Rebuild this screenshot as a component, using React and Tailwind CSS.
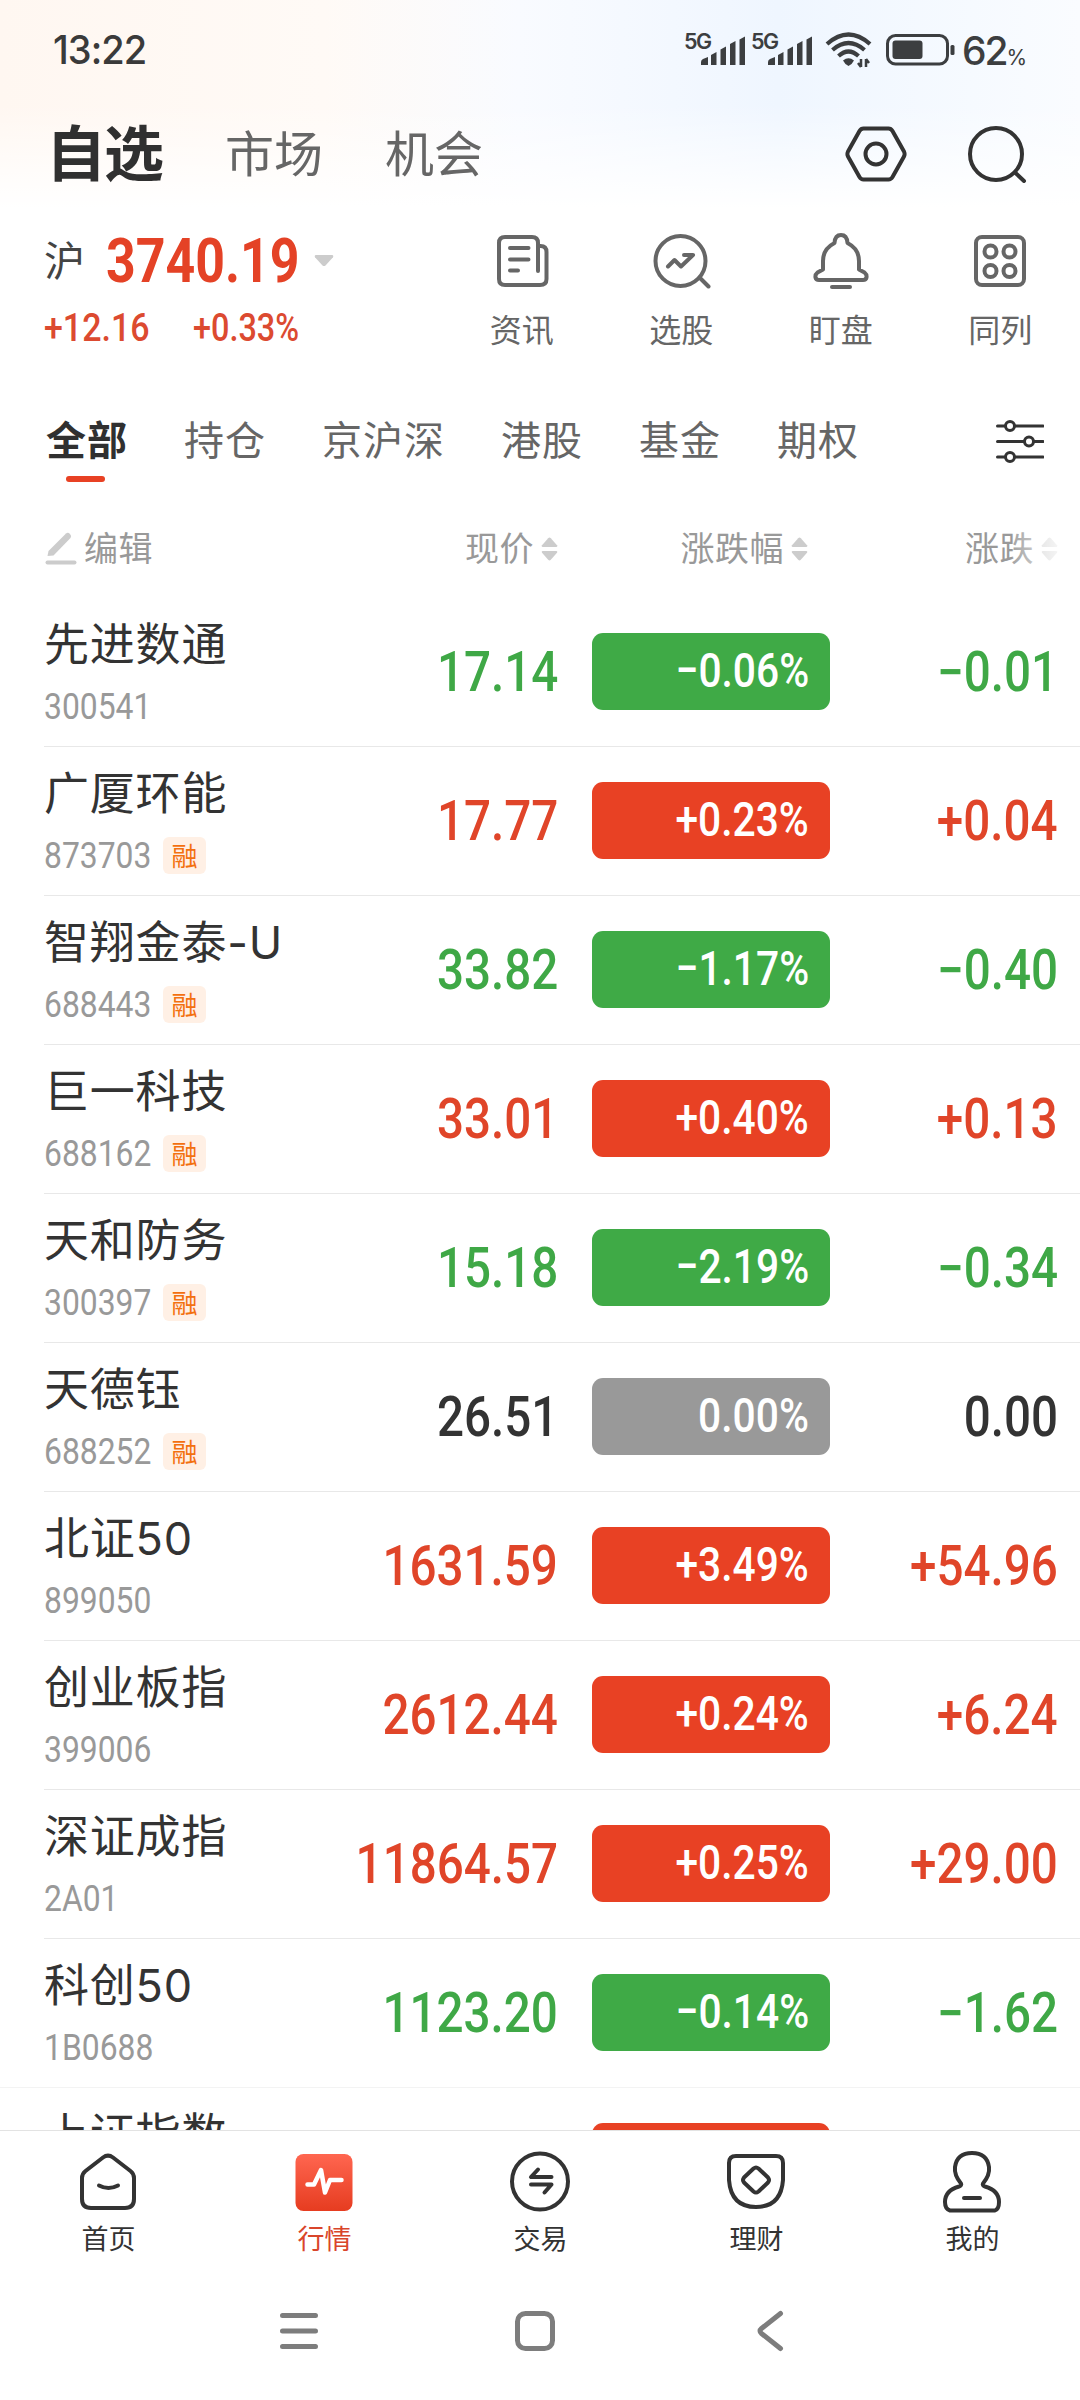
const NUM = 'font-["Roboto","Noto_Sans_CJK_SC",sans-serif]';

const quotes = [
  { name: '先进数通', code: '300541', price: '17.14', percent: '−0.06%', change: '−0.01' },
  { name: '广厦环能', code: '873703', margin: true, price: '17.77', percent: '+0.23%', change: '+0.04' },
  { name: '智翔金泰-U', code: '688443', margin: true, price: '33.82', percent: '−1.17%', change: '−0.40' },
  { name: '巨一科技', code: '688162', margin: true, price: '33.01', percent: '+0.40%', change: '+0.13' },
  { name: '天和防务', code: '300397', margin: true, price: '15.18', percent: '−2.19%', change: '−0.34' },
  { name: '天德钰', code: '688252', margin: true, price: '26.51', percent: '0.00%', change: '0.00' },
  { name: '北证50', code: '899050', price: '1631.59', percent: '+3.49%', change: '+54.96' },
  { name: '创业板指', code: '399006', price: '2612.44', percent: '+0.24%', change: '+6.24' },
  { name: '深证成指', code: '2A01', price: '11864.57', percent: '+0.25%', change: '+29.00' },
  { name: '科创50', code: '1B0688', price: '1123.20', percent: '−0.14%', change: '−1.62', wideDivider: true },
];

const textColors = { up: 'text-[#e04529]', down: 'text-[#3fa846]', flat: 'text-[#333333]' };
const pillColors = { up: 'bg-[#e84124]', down: 'bg-[#3faa46]', flat: 'bg-[#999999]' };

function trendOf(value) {
  if (value.startsWith('+')) return 'up';
  if (value.startsWith('−')) return 'down';
  return 'flat';
}

function Signal() {
  return (
    <svg className="overflow-visible" width="61" height="36" viewBox="0 0 61 36" fill="#3c3e40">
      <text x="-1" y="16.500" fontSize="21.500" fontWeight="600" fontFamily="Inter, sans-serif" textLength="28">5G</text>
      <path d="M16 33v-3q0-2 2-3l5-2v8z" />
      <path d="M26 33V23l5.500-3v13z" />
      <path d="M35.500 33V17.500l5.500-3v18.500z" />
      <path d="M45 33V12l5.500-3v24z" />
      <path d="M54.500 33V7.500l5.500-3v28.500z" />
    </svg>
  );
}

function StatusBar() {
  return (
    <div className="flex h-[100px] items-center justify-between pr-[54px] pl-[53px] text-[#3a3a3a]">
      <div className='origin-left scale-x-[0.95] text-[40px] leading-none font-medium font-["Inter",sans-serif] tracking-[-1px]'>13:22</div>
      <div className="flex items-center">
        <Signal />
        <div className="w-[6px]" />
        <Signal />
        <svg className="ml-[12px]" width="48" height="38" viewBox="0 0 48 38" fill="none" stroke="#3c3e40" strokeWidth="4.200">
          <path d="M2 13Q23.500-6 45 13" />
          <path d="M7.500 19Q23.500 5 39.500 19" />
          <path d="M13.500 25Q23.500 16 33.500 25" />
          <path d="M18 29.500q5.500-4.500 11 0q-2 4-5.500 5.500q-3.500-1.500-5.500-5.500z" fill="#3c3e40" stroke="none" />
          <path d="M36 28v8M33 32l3 4M41 36v-8M44 32l-3-4" strokeWidth="2.500" />
        </svg>
        <svg className="ml-[13px]" width="70" height="32" viewBox="0 0 70 32" fill="none">
          <rect x="1.500" y="1.500" width="60" height="28.500" rx="8" stroke="#3c3e40" strokeWidth="3" />
          <rect x="6.500" y="6.500" width="30" height="18.500" rx="3" fill="#3c3e40" />
          <rect x="64.500" y="11" width="4" height="10" rx="1.500" fill="#3c3e40" />
        </svg>
        <div className='ml-[6px] flex w-[64px] items-baseline leading-none whitespace-nowrap font-["Inter",sans-serif] text-[#3c3e40]'>
          <span className="text-[39px] font-medium tracking-[-2px]">62</span>
          <span className="text-[21px]">%</span>
        </div>
      </div>
    </div>
  );
}

function TopBar() {
  return (
    <div className="flex h-[108px] items-center pr-[51px] pl-[46px]">
      <div className="mb-[8px] text-[60px] leading-none font-bold tracking-[-2px] text-[#303030]">自选</div>
      <div className="mb-[8px] ml-[63px] text-[49px] leading-none text-[#666666]">市场</div>
      <div className="mb-[8px] ml-[62px] text-[49px] leading-none text-[#666666]">机会</div>
      <svg className="ml-auto" width="62" height="58" viewBox="0 0 62 58" fill="none" stroke="#333333" strokeWidth="4" strokeLinejoin="round">
        <path d="M18.500 3.500H43.500Q46 3.500 47.500 6L59 26.500Q60.200 29 59 31.500L47.500 52Q46 54.500 43.500 54.500H18.500Q16 54.500 14.500 52L3 31.500Q1.800 29 3 26.500L14.500 6Q16 3.500 18.500 3.500z" />
        <circle cx="31" cy="29" r="10.500" />
      </svg>
      <svg className="ml-[60px]" width="62" height="58" viewBox="0 0 62 58" fill="none" stroke="#333333" strokeWidth="4" strokeLinecap="round">
        <circle cx="29" cy="29" r="26" />
        <path d="M48 47.500l9 8.500" />
      </svg>
    </div>
  );
}

const shortcuts = [
  {
    label: '资讯',
    icon: (
      <>
        <path d="M46 40V12q0-6-6-6H13q-6 0-6 6v36q0 6 6 6h35q6.500 0 6.500-6V21q0-6-6-6H47" />
        <path d="M18 17h18.500M18 28.500h18.500M18 39.500h8" />
      </>
    ),
  },
  {
    label: '选股',
    icon: (
      <>
        <circle cx="29.500" cy="30" r="25" />
        <path d="M17 35.500l6.500-6.500 6.500 6.500L42 24H33" />
        <path d="M49 47l8.500 8.500" />
      </>
    ),
  },
  {
    label: '盯盘',
    icon: (
      <>
        <path d="M23.500 12Q24 4 30 4t6.500 8Q48 18 48 30v8.500l5.500 3Q56 43.500 55.500 46.500 55 49 52 49H8q-3 0-3.500-2.500Q4 43.500 6.500 41.500l5.500-3V30Q12 18 23.500 12z" />
        <path d="M21 56h18" />
      </>
    ),
  },
  {
    label: '同列',
    icon: (
      <>
        <rect x="6" y="6" width="48" height="48" rx="6" />
        <circle cx="20.500" cy="20.500" r="6" />
        <circle cx="39.500" cy="20.500" r="6" />
        <circle cx="20.500" cy="40" r="6" />
        <circle cx="39.500" cy="40" r="6" />
      </>
    ),
  },
];

function IndexSummary() {
  return (
    <div className="flex h-[170px] justify-between">
      <div className="pl-[44px] pt-[27px]">
        <div className="flex h-[50px] items-center">
          <span className="mb-[3px] text-[41px] leading-none text-[#444444]">沪</span>
          <span className={`${NUM} mt-[2px] ml-[21px] w-[195px] origin-left scale-x-[0.85] text-[61px] leading-none font-bold text-[#e44226]`}>3740.19</span>
          <svg className="mt-px ml-[13px]" width="20" height="12" viewBox="0 0 20 12" fill="#cccccc">
            <path d="M1.500 0h17q1.500 0.800 0.500 2.200l-7.500 8.300q-1.500 1.200-3 0L1 2.200Q0 0.800 1.500 0z" />
          </svg>
        </div>
        <div className={`${NUM} mt-[22px] flex h-[42px] items-center text-[39.500px] leading-none font-medium text-[#dc4a30]`}>
          <span className="w-[149px] origin-left scale-x-[0.86]">+12.16</span>
          <span className="origin-left scale-x-[0.82]">+0.33%</span>
        </div>
      </div>
      <div className="flex">
        {shortcuts.map((item) => (
          <div key={item.label} className="flex w-[159.500px] flex-col items-center pt-[23px]">
            <svg width="60" height="60" viewBox="0 0 60 60" fill="none" stroke="#666666" strokeWidth="4" strokeLinecap="round" strokeLinejoin="round">
              {item.icon}
            </svg>
            <span className="mt-[21px] text-[32px] leading-none text-[#666666]">{item.label}</span>
          </div>
        ))}
      </div>
    </div>
  );
}

function Tabs() {
  const tabs = ['持仓', '京沪深', '港股', '基金', '期权'];
  return (
    <div className="flex h-[122px] items-center pr-[36px] pl-[46px]">
      <div className="relative mb-[2px] text-[40px] leading-none font-bold tracking-[1px] text-[#303030]">
        全部
        <div className="absolute top-[58px] left-[20px] h-[6px] w-[39px] rounded-full bg-[#e84124]" />
      </div>
      {tabs.map((tab) => (
        <div key={tab} className="mb-[2px] ml-[56px] text-[40px] leading-none tracking-[1px] text-[#666666]">{tab}</div>
      ))}
      <svg className="mt-[3px] ml-auto" width="48" height="44" viewBox="0 0 48 44" fill="none" stroke="#333333" strokeWidth="3" strokeLinecap="round">
        <path d="M1.500 7H9M19 7h28M1.500 22.500H28M38 22.500h9M1.500 38H9M19 38h28" />
        <circle cx="14" cy="7" r="4.500" />
        <circle cx="33" cy="22.500" r="4.500" />
        <circle cx="14" cy="38" r="4.500" />
      </svg>
    </div>
  );
}

function SortIcon() {
  return (
    <svg className="ml-[7px]" width="17" height="26" viewBox="0 0 17 26" fill="#cccccc">
      <path d="M1.500 11Q0 10.500 1 9.200L7.200 2.200q1.300-1.200 2.600 0L16 9.200q1 1.300-0.500 1.800z" />
      <path d="M1.500 15Q0 15.500 1 16.800l6.200 7q1.300 1.200 2.600 0l6.200-7q1-1.300-0.500-1.800z" />
    </svg>
  );
}

function ListHeader() {
  return (
    <div className="flex h-[98px] items-center pl-[45px] text-[34px] leading-none text-[#999999]">
      <svg className="mb-[2px]" width="32" height="34" viewBox="0 0 32 34" fill="none" stroke="#cccccc">
        <path d="M2.500 31.500h27" strokeWidth="4" strokeLinecap="round" />
        <path d="M2.500 25l1-5L21 2.500q2-1.500 4 0.500t0.500 4L8.500 24.500z" fill="#cccccc" stroke="none" />
      </svg>
      <span className="mb-[4px] ml-[7px] tracking-[0.500px]">编辑</span>
      <div className="ml-auto flex items-center tracking-[0.500px]"><span className="mb-[4px]">现价</span><SortIcon /></div>
      <div className="flex w-[250px] items-center justify-end tracking-[0.500px]"><span className="mb-[4px]">涨跌幅</span><SortIcon /></div>
      <div className="relative flex w-[250px] items-center justify-end tracking-[0.500px]">
        <span className="mb-[4px]">涨跌</span><SortIcon />
        <div className="absolute top-[-8px] right-0 h-[50px] w-[46px] bg-gradient-to-r from-white/10 to-white/80" />
      </div>
      <div className="w-[22px]" />
    </div>
  );
}

function QuoteRow({ quote }) {
  const trend = trendOf(quote.change);
  return (
    <div className={`flex h-[149px] shrink-0 items-center border-b ${quote.wideDivider ? 'border-[#f3f3f3] pl-[44px]' : 'ml-[44px] border-[#e8e8e8]'}`}>
      <div className="w-[260px]">
        <div className='mt-[3px] text-[45px] leading-[46px] tracking-[0.800px] whitespace-nowrap text-[#333333] font-["Inter","Noto_Sans_CJK_SC",sans-serif]'>{quote.name}</div>
        <div className="mt-[20px] flex h-[37px] items-center">
          <span className={`${NUM} w-[119px] origin-left scale-x-[0.885] text-[36px] leading-none text-[#999999]`}>{quote.code}</span>
          {quote.margin && (
            <span className="flex h-[37px] w-[43px] items-center justify-center rounded-[6px] bg-[#fff0e5] pb-[2px] text-[26px] leading-none text-[#f3700f]">融</span>
          )}
        </div>
      </div>
      <div className={`${NUM} mt-px flex w-[254px] justify-end text-[55px] leading-none ${textColors[trend]}`}>
        <span className="origin-right scale-x-[0.865] font-[480]">{quote.price}</span>
      </div>
      <div className={`${NUM} mb-[2px] ml-[34px] flex h-[77px] w-[238px] items-center justify-end rounded-[11px] pr-[21px] text-[48.500px] leading-none text-white ${pillColors[trend]}`}>
        <span className="origin-right scale-x-[0.84] font-[480]">{quote.percent}</span>
      </div>
      <div className={`${NUM} mt-px flex w-[228px] justify-end text-[55px] leading-none ${textColors[trend]}`}>
        <span className="origin-right scale-x-[0.865] font-[480]">{quote.change}</span>
      </div>
    </div>
  );
}

const navItems = [
  {
    label: '首页',
    icon: (
      <>
        <path d="M27 7.500q5-3.800 10 0L54.500 21Q58 23.800 58 28v21q0 9-9 9H15q-9 0-9-9V28q0-4.200 3.500-7z" />
        <path d="M23 35.500q9.500 5 19 0" />
      </>
    ),
  },
  {
    label: '行情',
    active: true,
    icon: (
      <>
        <defs>
          <linearGradient id="marketFill" x1="0" y1="0" x2="0" y2="1">
            <stop offset="0" stopColor="#ff6650" />
            <stop offset="1" stopColor="#e63c20" />
          </linearGradient>
        </defs>
        <rect x="3.500" y="4" width="57" height="57" rx="8" fill="url(#marketFill)" stroke="none" />
        <path d="M15.500 34.500h6.500l7-14.500 4 22.500 5-12.500h11.500" stroke="#ffffff" strokeWidth="4.500" />
      </>
    ),
  },
  {
    label: '交易',
    icon: (
      <>
        <circle cx="32" cy="31.500" r="28" />
        <path d="M30 19.500l-7 7.500h20.500M23 34.500h20.500l-7 8" />
      </>
    ),
  },
  {
    label: '理财',
    icon: (
      <>
        <path d="M12 6h40q7 0 7 7v17Q57 57 32 57T5 30V13q0-7 7-7z" />
        <path d="M29.500 18.500q2.500-2 5 0L44 27.500q2 2.500 0 5L34.500 41.500q-2.500 2-5 0L20 32.500q-2-2.500 0-5z" />
      </>
    ),
  },
  {
    label: '我的',
    icon: (
      <>
        <path d="M21 33.500Q14 25 15 17 17 3 32 3t17 14Q50 25 43 33.500q-1 2 2 3 14 4 14 15.500 0 7-4 8.500H10q-5-1.500-5-8.500Q5 40.500 19 36.500q3-1 2-3z" />
        <path d="M24 48h16" />
      </>
    ),
  },
];

function BottomNav() {
  return (
    <div className="flex h-[143px] border-t border-[#e3e3e3] bg-white">
      {navItems.map((item) => (
        <div key={item.label} className="flex flex-1 flex-col items-center pt-[19px]">
          <svg width="64" height="64" viewBox="0 0 64 64" fill="none" stroke="#333333" strokeWidth="4" strokeLinecap="round" strokeLinejoin="round">
            {item.icon}
          </svg>
          <span className={`mt-[10px] ml-px text-[27px] leading-none ${item.active ? 'text-[#d9452b]' : 'text-[#333333]'}`}>{item.label}</span>
        </div>
      ))}
    </div>
  );
}

function SystemNav() {
  return (
    <div className="flex flex-1 items-start bg-white pt-[36px] pl-[277px]">
      <svg width="44" height="44" viewBox="0 0 44 44" stroke="#7d7d7d" strokeWidth="5" strokeLinecap="round">
        <path d="M5.500 6.500h33M5.500 22h33M5.500 37.500h33" />
      </svg>
      <svg className="ml-[192px]" width="44" height="44" viewBox="0 0 44 44" fill="none" stroke="#7d7d7d" strokeWidth="5">
        <rect x="4.500" y="4.500" width="35" height="35" rx="8" />
      </svg>
      <svg className="ml-[192px]" width="44" height="44" viewBox="0 0 44 44" fill="none" stroke="#7d7d7d" strokeWidth="5" strokeLinecap="round" strokeLinejoin="round">
        <path d="M31.500 4.500L12.500 19.500Q9.500 22 12.500 24.500L31.500 39.500" />
      </svg>
    </div>
  );
}

export default function App() {
  return (
    <div className='flex h-[2400px] w-[1080px] flex-col overflow-hidden bg-white font-["Noto_Sans_CJK_SC",sans-serif]'>
      <div className="bg-[linear-gradient(to_bottom,transparent_50%,white_100%),linear-gradient(to_right,#fff7f1_0%,#fffaf6_30%,#f9fbff_48%,#eff6ff_72%,#f6faff_90%,#fafcff_100%)]">
        <StatusBar />
        <TopBar />
      </div>
      <IndexSummary />
      <Tabs />
      <ListHeader />
      <div className="flex h-[1532px] flex-col overflow-hidden">
        {quotes.map((quote) => (
          <QuoteRow key={quote.code} quote={quote} />
        ))}
        <QuoteRow quote={{ name: '上证指数', code: '1A0001', price: '3740.19', percent: '+0.33%', change: '+12.16' }} />
      </div>
      <BottomNav />
      <SystemNav />
    </div>
  );
}
